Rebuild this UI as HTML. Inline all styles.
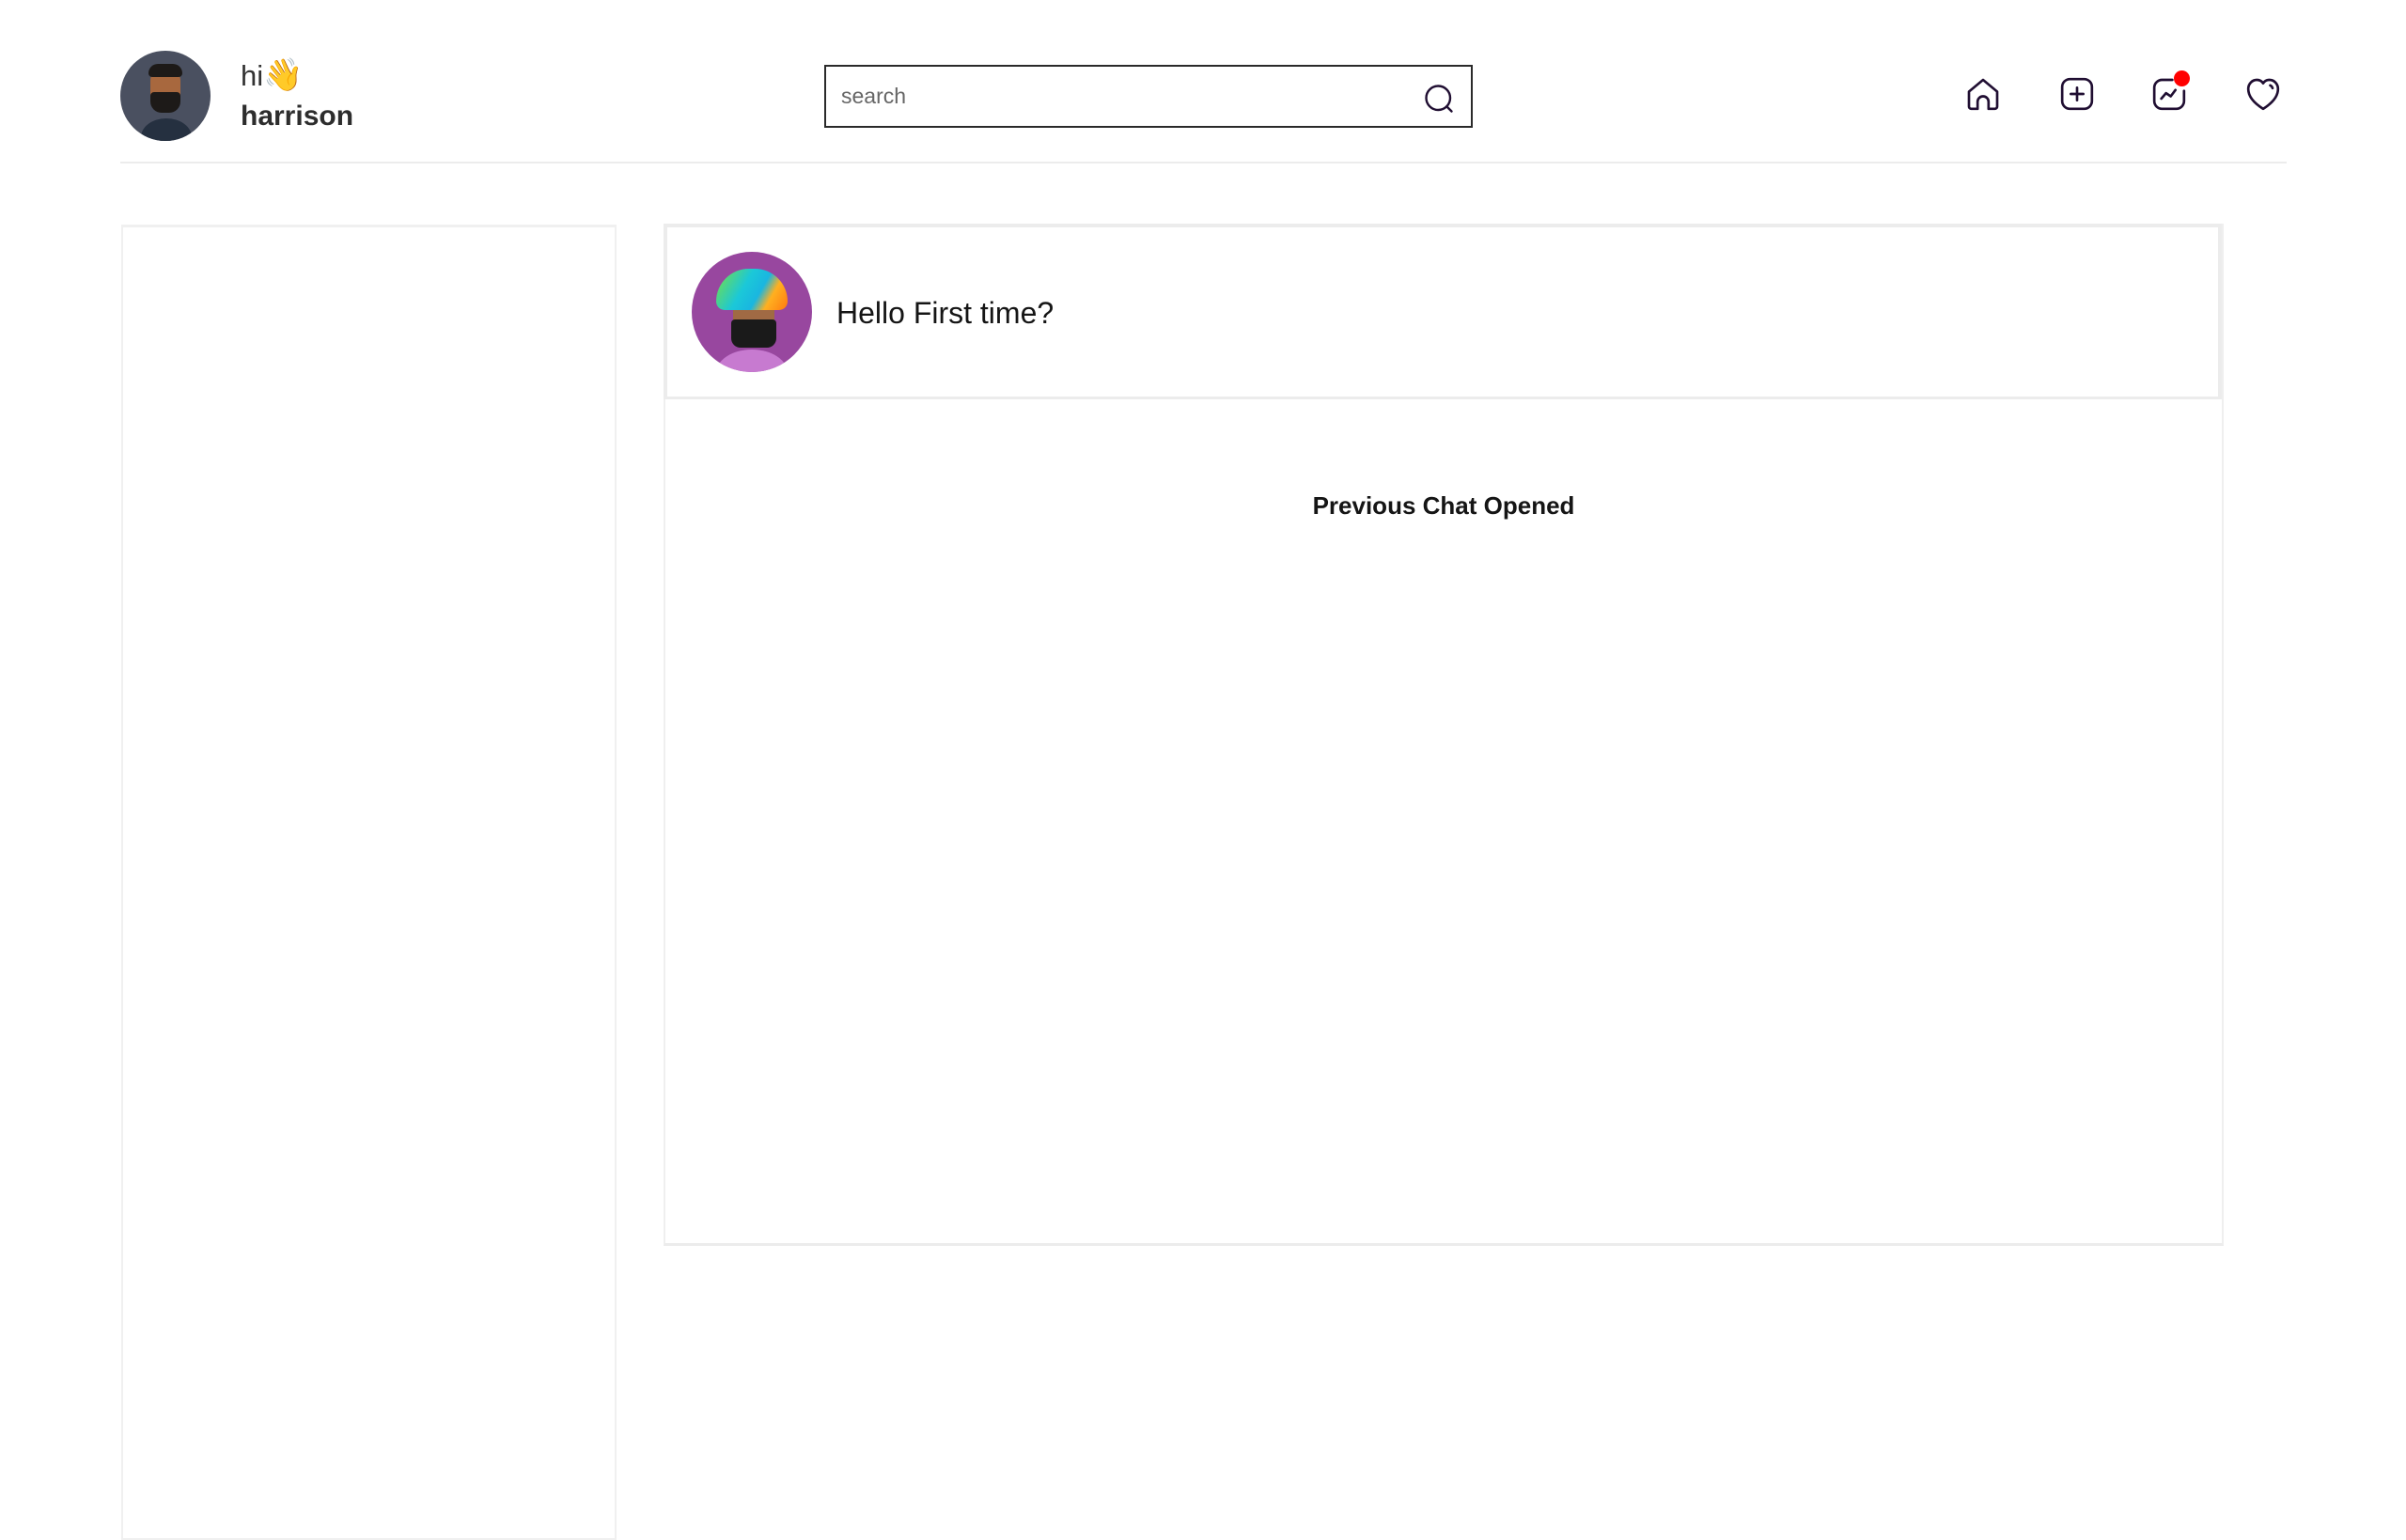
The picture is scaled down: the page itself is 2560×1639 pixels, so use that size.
<!DOCTYPE html>
<html><head><meta charset="utf-8"><style>
*{box-sizing:border-box;margin:0;padding:0}
body{width:2560px;height:1600px;background:#fff;font-family:"Liberation Sans","Noto Sans CJK JP",sans-serif;position:relative;overflow:hidden}
.abs{position:absolute}
.ico{position:absolute;top:80px;width:40px;height:40px}
</style></head><body>
<div class="abs" style="left:128px;top:54px;width:96px;height:96px;border-radius:50%;background:#4a5060;overflow:hidden">
  <div class="abs" style="left:22px;top:72px;width:54px;height:40px;border-radius:50%;background:#253040"></div>
  <div class="abs" style="left:32px;top:18px;width:32px;height:48px;border-radius:14px;background:#a8683e"></div>
  <div class="abs" style="left:30px;top:14px;width:36px;height:14px;border-radius:10px 10px 4px 4px;background:#1d1a18"></div>
  <div class="abs" style="left:32px;top:44px;width:32px;height:22px;border-radius:4px 4px 12px 12px;background:#1d1a18"></div>
</div>
<div class="abs" style="left:256px;top:62px;font-size:31px;color:#333;line-height:36px">hi<span style="font-size:34px">👋</span></div>
<div class="abs" style="left:256px;top:106px;font-size:30px;font-weight:bold;color:#2d2d2d;line-height:36px">harrison</div>

<div class="abs" style="left:877px;top:69px;width:690px;height:67px;border:2px solid #2a2a2a;background:#fff">
  <div class="abs" style="left:16px;top:18px;font-size:23px;color:#666">search</div>
  <svg class="abs" style="left:634px;top:16px" width="36" height="36" viewBox="0 0 24 24" fill="none" stroke="#200e32" stroke-width="1.6" stroke-linecap="round"><circle cx="11.5" cy="11.5" r="8.5"/><path d="M17.5 17.5L21 21"/></svg>
</div>

<svg class="ico" style="left:2090px" viewBox="0 0 24 24" fill="none" stroke="#200e32" stroke-width="1.6" stroke-linejoin="round"><path d="M3 10.5L12 3l9 7.5V20a1.5 1.5 0 0 1-1.5 1.5H15.5V17a3.5 3.5 0 0 0-7 0v4.5H4.5A1.5 1.5 0 0 1 3 20z"/></svg>
<svg class="ico" style="left:2190px" viewBox="0 0 24 24" fill="none" stroke="#200e32" stroke-width="1.6" stroke-linecap="round"><rect x="2.5" y="2.5" width="19" height="19" rx="5"/><path d="M12 8v8M8 12h8"/></svg>
<svg class="ico" style="left:2288px" viewBox="0 0 24 24" fill="none" stroke="#200e32" stroke-width="1.6" stroke-linecap="round" stroke-linejoin="round"><path d="M14 3H7.5a5 5 0 0 0-5 5v8.5a5 5 0 0 0 5 5h9a5 5 0 0 0 5-5V10"/><path d="M7 15l3-3.5 3 2 3-4"/></svg>
<div class="abs" style="left:2313px;top:75px;width:17px;height:17px;border-radius:50%;background:#f00"></div>
<svg class="ico" style="left:2388px" viewBox="0 0 24 24" fill="none" stroke="#200e32" stroke-width="1.6" stroke-linecap="round" stroke-linejoin="round"><path d="M12 21.5C8 19 2.5 14.5 2.5 8.8 2.5 5.5 5 3 8 3c1.8 0 3.2.9 4 2.2C12.8 3.9 14.2 3 16 3c3 0 5.5 2.5 5.5 5.8 0 5.7-5.5 10.2-9.5 12.7z"/><path d="M16.5 6.5c.8.3 1.3 1 1.5 1.8"/></svg>

<div class="abs" style="left:128px;top:172px;width:2305px;height:2px;background:#ececec"></div>

<div class="abs" style="left:129px;top:239px;width:527px;height:1400px;border:2px solid #f0f0f0;border-top-width:3px"></div>

<div class="abs" style="left:706px;top:238px;width:1660px;height:1088px;border:2px solid #efefef;border-bottom:3px solid #ececec"></div>
<div class="abs" style="left:706px;top:238px;width:1658px;height:187px;border:4px solid #ececec;border-bottom:3px solid #ececec"></div>

<div class="abs" style="left:736px;top:268px;width:128px;height:128px;border-radius:50%;background:#98479f;overflow:hidden">
  <div class="abs" style="left:26px;top:104px;width:76px;height:50px;border-radius:50%;background:#c77ad0"></div>
  <div class="abs" style="left:44px;top:44px;width:44px;height:50px;border-radius:10px;background:#a06a44"></div>
  <div class="abs" style="left:42px;top:72px;width:48px;height:30px;border-radius:4px 4px 10px 10px;background:#1a1a1a"></div>
  <div class="abs" style="left:26px;top:18px;width:76px;height:44px;border-radius:38px 38px 10px 10px;background:linear-gradient(120deg,#7be03c,#1bc8d8 40%,#1ab6e0 60%,#ffb020 75%,#ff7a10)"></div>
</div>
<div class="abs" style="left:890px;top:313px;font-size:32px;font-weight:500;color:#151515;line-height:40px">Hello First time?</div>
<div class="abs" style="left:706px;top:521px;width:1660px;text-align:center;font-size:26px;font-weight:bold;color:#151515;line-height:34px">Previous Chat Opened</div>
</body></html>
